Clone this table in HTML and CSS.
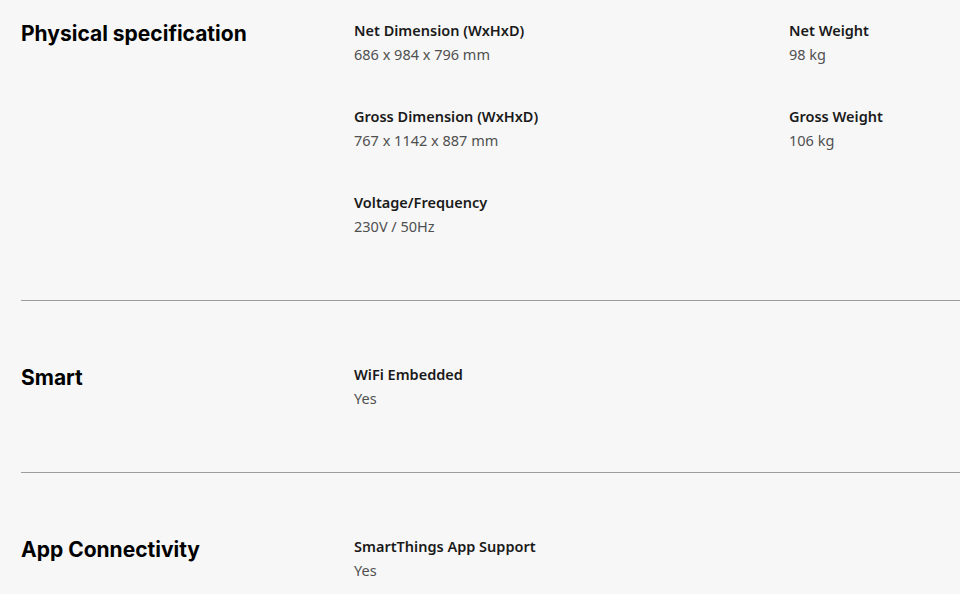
FILE: index.html
```html
<!DOCTYPE html>
<html>
<head>
<meta charset="utf-8">
<link rel="stylesheet" href="styles.css">
</head>
<body>
<div class="page">
  <section class="spec spec--first">
    <h2 class="spec__title">Physical specification</h2>
    <div class="spec__grid">
      <div class="item"><div class="item__label">Net Dimension (WxHxD)</div><div class="item__value">686 x 984 x 796 mm</div></div>
      <div class="item"><div class="item__label">Net Weight</div><div class="item__value">98 kg</div></div>
      <div class="item"><div class="item__label">Gross Dimension (WxHxD)</div><div class="item__value">767 x 1142 x 887 mm</div></div>
      <div class="item"><div class="item__label">Gross Weight</div><div class="item__value">106 kg</div></div>
      <div class="item"><div class="item__label">Voltage/Frequency</div><div class="item__value">230V / 50Hz</div></div>
    </div>
  </section>
  <section class="spec">
    <h2 class="spec__title">Smart</h2>
    <div class="spec__grid">
      <div class="item"><div class="item__label">WiFi Embedded</div><div class="item__value">Yes</div></div>
    </div>
  </section>
  <section class="spec spec--last">
    <h2 class="spec__title">App Connectivity</h2>
    <div class="spec__grid">
      <div class="item"><div class="item__label">SmartThings App Support</div><div class="item__value">Yes</div></div>
    </div>
  </section>
</div>
</body>
</html>
```
FILE: styles.css
```css
html, body { margin: 0; padding: 0; background: #ffffff; }
.page {
  background: #f7f7f7;
  padding-left: 21px;
  height: 594px;
  overflow: hidden;
}
.spec {
  display: grid;
  grid-template-columns: 333px 1fr;
  padding: 61px 0 62px;
  border-bottom: 1px solid #9d9d9d;
}
.spec--first { padding-top: 18px; }
.spec--last { border-bottom: none; }
.spec__title {
  margin: 0;
  font-family: "Inter", "Lato", sans-serif;
  font-weight: 700;
  font-size: 21px;
  line-height: 32px;
  color: #000;
}
.spec__grid {
  display: grid;
  grid-template-columns: 435px 1fr;
  row-gap: 38px;
}
.item { font-family: "Noto Sans", "Open Sans", sans-serif; font-size: 14.5px; line-height: 24px; }
.item__label { font-weight: 600; color: #1a1a1a; }
.item__value { color: #505050; }
```
